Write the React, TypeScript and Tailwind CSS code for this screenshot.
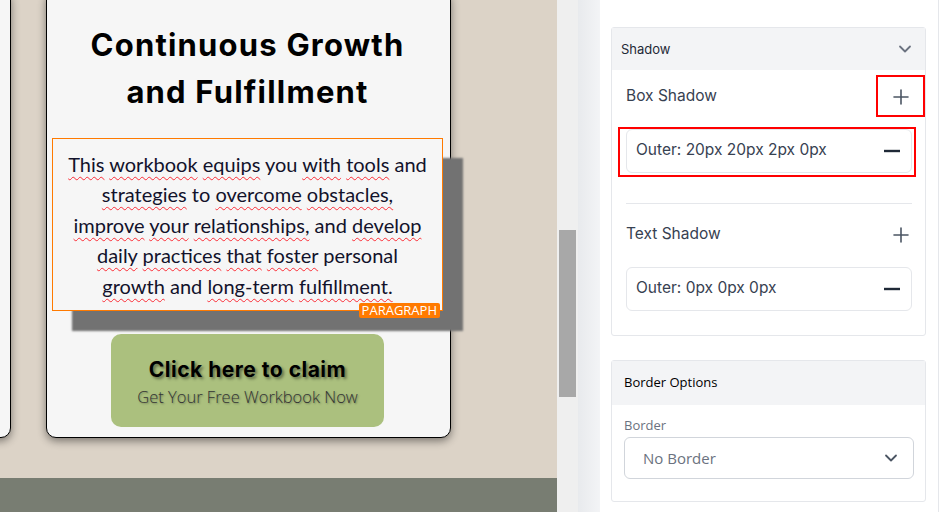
import React from "react";

const lines: [string, boolean][][] = [
  [["This", true], ["workbook", true], ["equips", true], ["you", false], ["with", true], ["tools", true], ["and", false]],
  [["strategies", true], ["to", false], ["overcome", true], ["obstacles,", true]],
  [["improve", true], ["your", true], ["relationships,", true], ["and", false], ["develop", true]],
  [["daily", true], ["practices", true], ["that", true], ["foster", true], ["personal", false]],
  [["growth", true], ["and", false], ["long-term", true], ["fulfillment.", true]],
];

function Plus() {
  return (
    <svg width="18" height="18" viewBox="0 0 18 18" fill="none" stroke="#4b5563" strokeWidth="1.6" strokeLinecap="round">
      <path d="M9 2v14M2 9h14" />
    </svg>
  );
}

function Minus() {
  return (
    <svg width="18" height="18" viewBox="0 0 18 18" fill="none" stroke="#1f2937" strokeWidth="2.4">
      <path d="M1 9h16" />
    </svg>
  );
}

function Chevron({ color = "#6b7280" }: { color?: string }) {
  return (
    <svg width="14" height="14" viewBox="0 0 14 14" fill="none" stroke={color} strokeWidth="1.8" strokeLinecap="round" strokeLinejoin="round">
      <path d="M2 4.5l5 5 5-5" />
    </svg>
  );
}

function ShadowItem({ label }: { label: string }) {
  return (
    <div className="flex h-[44px] items-center justify-between rounded-md border border-[#e5e7eb] pl-[9px] pr-[10px]">
      <span className="-mt-[2px] text-[15.5px] text-[#374151]">{label}</span>
      <Minus />
    </div>
  );
}

export default function App() {
  return (
    <div className="flex h-[512px] w-[939px] overflow-hidden bg-white">
      {/* canvas */}
      <div className="flex w-[557px] flex-col">
        <div className="h-[478px] overflow-hidden bg-[#dcd3c7]">
          <div className="-mt-[10px] flex h-[448px]">
            <div className="-ml-[189px] w-[200px] rounded-[10px] border border-black bg-[#f6f6f6] shadow-[0_3px_8px_rgba(0,0,0,0.45)]" />
            <div className="ml-[35px] flex w-[405px] flex-col items-center rounded-[10px] border border-black bg-[#f6f6f6] pl-[5px] pr-[7px] pt-[30px] shadow-[0_3px_8px_rgba(0,0,0,0.45)]">
              <h1 className="text-center font-['Inter',sans-serif] text-[31px] font-bold leading-[47px] tracking-[1.2px] text-black">
                Continuous Growth
                <br />
                and Fulfillment
              </h1>
              <div className="relative mt-[23px] w-full border border-[#ff7a00] bg-[#f6f6f6] pt-[10px] pb-[9px] text-center font-['Lato',sans-serif] text-[20px] leading-[30.4px] text-[#12122b] shadow-[20px_20px_2px_0px_#727272]">
                {lines.map((line, i) => (
                  <div key={i}>
                    {line.map(([w, bad], j) => (
                      <React.Fragment key={j}>
                        {j > 0 && " "}
                        <span className={bad ? "underline decoration-red-500 decoration-wavy decoration-1 underline-offset-[4px]" : ""}>{w}</span>
                      </React.Fragment>
                    ))}
                  </div>
                ))}
                <span className="absolute -bottom-[8px] right-[2px] rounded-[2px] bg-[#ff7a00] px-[3px] font-['Open_Sans',sans-serif] text-[13px] leading-[15px] text-white">
                  PARAGRAPH
                </span>
              </div>
              <div className="mt-[23px] flex h-[93px] w-[273px] flex-col items-center justify-center rounded-[10px] bg-[#abc07e] pt-[3px]">
                <div className="font-['Inter',sans-serif] text-[21px] font-bold leading-[26px] tracking-[0.5px] text-black [text-shadow:2px_2px_3px_rgba(0,0,0,0.45)]">
                  Click here to claim
                </div>
                <div className="mt-[3px] font-['Open_Sans',sans-serif] text-[16.5px] font-light leading-[22px] text-[#333] [text-shadow:1px_1px_2px_rgba(0,0,0,0.35)]">
                  Get Your Free Workbook Now
                </div>
              </div>
            </div>
          </div>
        </div>
        <div className="h-[34px] bg-[#787d72]" />
      </div>

      {/* scrollbar gutter */}
      <div className="flex w-[43px]">
        <div className="w-[21px] bg-[#efefef] pt-[230px] pl-[2px]">
          <div className="h-[167px] w-[17px] bg-[#a8a8a8]" />
        </div>
        <div className="w-[22px] bg-gradient-to-r from-[#e8eaed] to-[#f3f4f6]" />
      </div>

      {/* settings panel */}
      <div className="w-[339px] border-r border-[#e5e7eb] bg-white pl-[11px] pr-[12px] pt-[27px] font-['Inter',sans-serif]">
        <div className="relative rounded-[3px] border border-[#e5e7eb]">
          <div className="flex h-[42px] items-center justify-between bg-[#f3f4f6] pl-[9px] pr-[13px]">
            <span className="mt-[2px] text-[13px] text-[#1f2937]">Shadow</span>
            <Chevron />
          </div>
          <div className="px-[14px] pb-[24px] pr-[13px]">
            <div className="mt-[6px] flex h-[40px] items-center justify-between">
              <span className="-mt-[1px] text-[15.5px] text-[#374151]">Box Shadow</span>
              <span className="mr-[2px] mt-[1px]"><Plus /></span>
            </div>
            <div className="mt-[13px]">
              <ShadowItem label="Outer: 20px 20px 2px 0px" />
            </div>
            <div className="mt-[30px] border-t border-[#e5e7eb]" />
            <div className="mt-[10px] flex h-[40px] items-center justify-between">
              <span className="-mt-[1px] text-[15.5px] text-[#374151]">Text Shadow</span>
              <span className="mr-[2px] mt-[1px]"><Plus /></span>
            </div>
            <div className="mt-[13px]">
              <ShadowItem label="Outer: 0px 0px 0px" />
            </div>
          </div>
          {/* annotation boxes */}
          <div className="pointer-events-none absolute left-[264px] top-[47px] h-[42px] w-[49px] border-2 border-[#ff0000]" />
          <div className="pointer-events-none absolute left-[6px] top-[99px] h-[50px] w-[298px] border-2 border-[#ff0000]" />
        </div>

        <div className="mt-[24px] rounded-[3px] border border-[#e5e7eb] font-['Open_Sans',sans-serif]">
          <div className="flex h-[44px] items-center bg-[#f3f4f6] pl-[12px]">
            <span className="text-[13px] font-medium text-black">Border Options</span>
          </div>
          <div className="pl-[12px] pr-[11px] pb-[22px]">
            <div className="mt-[11px] text-[13px] leading-[18px] text-[#6b7280]">Border</div>
            <div className="mt-[3px] flex h-[42px] items-center justify-between rounded-md border border-[#d1d5db] pl-[18px] pr-[15px]">
              <span className="text-[15px] text-[#6b7280]">No Border</span>
              <Chevron color="#4b5563" />
            </div>
          </div>
        </div>
      </div>
    </div>
  );
}
